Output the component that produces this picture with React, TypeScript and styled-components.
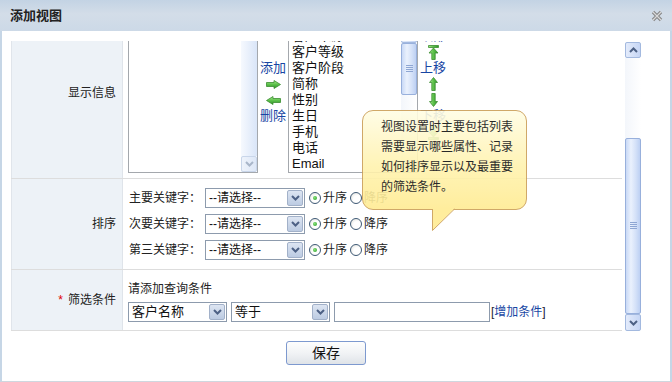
import React from 'react';
import styled, { createGlobalStyle } from 'styled-components';

const LINK = '#1846a3';

const GlobalStyle = createGlobalStyle`
  html, body { margin: 0; padding: 0; background: #fff; }
  body {
    font-family: "Liberation Sans", "Noto Sans CJK SC", sans-serif;
    font-size: 12px;
    color: #222;
  }
`;

const Dialog = styled.div`
  position: relative;
  width: 672px;
  height: 382px;
  display: flex;
  flex-direction: column;
  overflow: hidden;
  background: #fff;
`;

const TitleBar = styled.div`
  height: 31px;
  flex-shrink: 0;
  display: flex;
  align-items: center;
  justify-content: space-between;
  padding: 0 9px 0 10px;
  background: linear-gradient(#c3d3e4, #d3dde8 45%, #ccd9e7);
`;

const Title = styled.span`
  font-size: 13px;
  font-weight: bold;
  line-height: 16px;
  color: #222;
`;

const Body = styled.div`
  flex: 1;
  display: flex;
  flex-direction: column;
  border-left: 2px solid #c6d6e6;
  border-right: 2px solid #c6d6e6;
  border-bottom: 1px solid #cfd7df;
  padding: 10px 29px 0 9px;
`;

const ScrollRow = styled.div`
  display: flex;
  gap: 3px;
  height: 290px;
`;

const ScrollArea = styled.div`
  flex: 1;
  overflow: hidden;
`;

const FormTable = styled.div`
  margin-top: -21px;
`;

const Row = styled.div`
  display: flex;
  border-bottom: 1px solid #dddddd;
`;

const LabelCell = styled.div<{ $top?: number }>`
  width: 112px;
  flex-shrink: 0;
  box-sizing: border-box;
  background: #edf2f7;
  border-left: 1px solid #e0e5eb;
  border-right: 1px solid #dfe4ea;
  padding: ${(p) => (p.$top !== undefined ? `${p.$top}px` : '0')} 6px 0 0;
  display: flex;
  justify-content: flex-end;
  align-items: ${(p) => (p.$top !== undefined ? 'flex-start' : 'center')};
  font-size: 12px;
  line-height: 16px;
`;

const Required = styled.span`
  color: #e00000;
  margin-right: 5px;
`;

const ContentCell = styled.div<{ $pad: string; $column?: boolean }>`
  flex: 1;
  display: flex;
  flex-direction: ${(p) => (p.$column ? 'column' : 'row')};
  align-items: flex-start;
  gap: ${(p) => (p.$column ? '6px' : '0')};
  padding: ${(p) => p.$pad};
`;

/* ---------- list boxes ---------- */

const ListBox = styled.div`
  width: 130px;
  height: 147px;
  box-sizing: border-box;
  border: 1px solid #a4a8ad;
  background: #fff;
  display: flex;
`;

const ListItems = styled.div`
  flex: 1;
  padding: 1px 0 0 3px;
  font-size: 13px;
  line-height: 16px;
  color: #111;
  overflow: hidden;
  white-space: nowrap;
`;

const MoveColumn = styled.div<{ $top: number }>`
  width: 30px;
  display: flex;
  flex-direction: column;
  align-items: center;
  padding-top: ${(p) => p.$top}px;
`;

const Slot = styled.div`
  height: 16px;
  display: flex;
  align-items: center;
  justify-content: center;
  font-size: 13px;
  line-height: 16px;
  color: ${LINK};
  white-space: nowrap;
`;

/* ---------- scrollbars ---------- */

const VScroll = styled.div<{ $h: number; $mt?: number }>`
  width: 16px;
  height: ${(p) => p.$h}px;
  margin-top: ${(p) => p.$mt ?? 0}px;
  flex-shrink: 0;
  display: flex;
  flex-direction: column;
  background: linear-gradient(to right, #f1f5fb, #fdfeff);
`;

const ScrollBtn = styled.div<{ $h?: number; $off?: boolean }>`
  height: ${(p) => p.$h ?? 16}px;
  flex-shrink: 0;
  box-sizing: border-box;
  border: 1px solid ${(p) => (p.$off ? '#c9d6ea' : '#a3b9df')};
  border-radius: 2px;
  background: ${(p) =>
    p.$off ? 'linear-gradient(to right, #eef3fb, #dde7f7)' : 'linear-gradient(to right, #e3ebfb, #c6d6f5)'};
  display: flex;
  align-items: center;
  justify-content: center;
`;

const Track = styled.div<{ $h?: number; $tinted?: boolean }>`
  ${(p) => (p.$h !== undefined ? `height: ${p.$h}px;` : 'flex: 1;')}
  background: ${(p) =>
    p.$tinted ? 'linear-gradient(to right, #f6f9fe, #d9e5f8)' : 'linear-gradient(to right, #f3f6fb, #ffffff)'};
`;

const Thumb = styled.div<{ $h?: number }>`
  ${(p) => (p.$h !== undefined ? `height: ${p.$h}px;` : 'flex: 1;')}
  box-sizing: border-box;
  border: 1px solid #98b0dc;
  border-radius: 2px;
  background: linear-gradient(to right, #c9d9f6, #eaf1fd 35%, #d4e1f8 70%, #bdd0f3);
  display: flex;
  align-items: center;
  justify-content: center;
`;

const Chevron = ({ up, off }: { up?: boolean; off?: boolean }) => (
  <svg width="9" height="6" viewBox="0 0 9 6">
    <path
      d={up ? 'M1 5L4.5 1.5L8 5' : 'M1 1L4.5 4.5L8 1'}
      fill="none"
      stroke={off ? '#a9b6c9' : '#4d6185'}
      strokeWidth="2"
    />
  </svg>
);

const Grip = () => (
  <svg width="7" height="8" viewBox="0 0 7 8">
    {[0.5, 2.5, 4.5, 6.5].map((y) => (
      <line key={y} x1="0" y1={y} x2="7" y2={y} stroke="#8ea6d3" strokeWidth="1" />
    ))}
  </svg>
);

/* ---------- form controls ---------- */

const SortLine = styled.div`
  display: flex;
  align-items: center;
  height: 20px;
`;

const KeyLabel = styled.span`
  width: 72px;
  font-size: 12px;
  line-height: 16px;
  margin-right: 4px;
`;

const SelectBox = styled.div<{ $w: number }>`
  width: ${(p) => p.$w}px;
  height: 20px;
  box-sizing: border-box;
  border: 1px solid #8d9bad;
  background: #fff;
  display: flex;
  align-items: center;
  flex-shrink: 0;
`;

const SelectText = styled.span<{ $size: number }>`
  flex: 1;
  padding-left: 3px;
  font-size: ${(p) => p.$size}px;
  line-height: 16px;
  white-space: nowrap;
  overflow: hidden;
  color: #111;
`;

const SelectArrow = styled.span`
  width: 16px;
  height: 16px;
  margin-right: 1px;
  box-sizing: border-box;
  border: 1px solid #a2b1c9;
  border-radius: 2px;
  background: linear-gradient(#dde5f2, #bccbe2);
  display: flex;
  align-items: center;
  justify-content: center;
`;

const Select = ({ w, text, size = 12 }: { w: number; text: string; size?: number }) => (
  <SelectBox $w={w}>
    <SelectText $size={size}>{text}</SelectText>
    <SelectArrow>
      <Chevron />
    </SelectArrow>
  </SelectBox>
);

const RadioOption = styled.span<{ $ml: number }>`
  display: flex;
  align-items: center;
  gap: 2px;
  margin-left: ${(p) => p.$ml}px;
  font-size: 12px;
  line-height: 16px;
`;

const RadioDot = styled.span<{ $on?: boolean }>`
  width: 12px;
  height: 12px;
  box-sizing: border-box;
  border-radius: 50%;
  border: 1px solid #3d5874;
  background: radial-gradient(circle at 60% 60%, #ffffff 40%, #dcdcd6);
  display: flex;
  align-items: center;
  justify-content: center;
  &::after {
    content: '';
    display: ${(p) => (p.$on ? 'block' : 'none')};
    width: 4px;
    height: 4px;
    border-radius: 50%;
    background: radial-gradient(circle at 40% 40%, #8be27a, #1f9a23);
  }
`;

const Hint = styled.div`
  font-size: 12px;
  line-height: 16px;
  margin-bottom: -1px;
`;

const FilterLine = styled.div`
  display: flex;
  align-items: center;
  gap: 4px;
`;

const TextInput = styled.div`
  width: 156px;
  height: 20px;
  box-sizing: border-box;
  border: 1px solid #8d9bad;
  background: #fff;
`;

const AddLink = styled.span`
  margin-left: -3px;
  font-size: 12px;
  line-height: 16px;
  color: ${LINK};
  & b {
    font-weight: normal;
    color: #223;
  }
`;

/* ---------- footer ---------- */

const ButtonRow = styled.div`
  display: flex;
  justify-content: center;
  padding-top: 10px;
`;

const SaveButton = styled.button`
  width: 80px;
  height: 24px;
  box-sizing: border-box;
  border: 1px solid #7d99cf;
  border-radius: 3px;
  background: linear-gradient(#fdfdfd, #f1f3f5 50%, #dfe3e8);
  font-family: "Liberation Sans", "Noto Sans CJK SC", sans-serif;
  font-size: 14px;
  line-height: 16px;
  color: #111;
  padding: 0;
`;

/* ---------- tooltip ---------- */

const Tip = styled.div`
  position: absolute;
  left: 362px;
  top: 110px;
  width: 165px;
  height: 100px;
  opacity: 0.9;
`;

const Bubble = styled.div`
  width: 100%;
  height: 100%;
  box-sizing: border-box;
  border: 1px solid #cc9f58;
  border-radius: 11px;
  background: linear-gradient(#fffde4, #fff3b0 55%, #ffec93);
  padding: 6px 0 0 18px;
`;

const TipText = styled.div`
  width: 133px;
  font-size: 12px;
  line-height: 20px;
  color: #111;
`;

const Tail = styled.svg`
  position: absolute;
  left: 70px;
  top: 98px;
`;

/* ---------- icons ---------- */

const CloseIcon = () => (
  <svg width="12" height="12" viewBox="0 0 12 12">
    <path d="M2 2L10 10M10 2L2 10" stroke="#888" strokeWidth="3.4" />
    <path d="M2 2L10 10M10 2L2 10" stroke="#dadada" strokeWidth="1.1" />
  </svg>
);

type ArrowKind = 'right' | 'left' | 'top' | 'up' | 'down' | 'bottom';

const arrowShapes: Record<ArrowKind, { w: number; h: number; d: string }> = {
  right: { w: 15, h: 9, d: 'M0.5 2.5H8V0.5L14.5 4.5L8 8.5V6.5H0.5Z' },
  left: { w: 15, h: 9, d: 'M14.5 2.5H7V0.5L0.5 4.5L7 8.5V6.5H14.5Z' },
  top: { w: 11, h: 15, d: 'M0.5 0.5H10.5V2.5H0.5Z M5.5 3L10 8H7.2V14.5H3.8V8H1Z' },
  up: { w: 9, h: 14, d: 'M4.5 0.5L8.5 5.5H6.2V13.5H2.8V5.5H0.5Z' },
  down: { w: 9, h: 14, d: 'M4.5 13.5L8.5 8.5H6.2V0.5H2.8V8.5H0.5Z' },
  bottom: { w: 11, h: 15, d: 'M5.5 12L10 7H7.2V0.5H3.8V7H1Z M0.5 12.5H10.5V14.5H0.5Z' },
};

const GreenArrow = ({ kind }: { kind: ArrowKind }) => {
  const s = arrowShapes[kind];
  const gid = `ga-${kind}`;
  const horizontal = kind === 'left' || kind === 'right';
  return (
    <svg width={s.w} height={s.h} viewBox={`0 0 ${s.w} ${s.h}`}>
      <defs>
        <linearGradient id={gid} x1="0" y1="0" x2={horizontal ? '0' : '1'} y2={horizontal ? '1' : '0'}>
          <stop offset="0" stopColor="#a6e88c" />
          <stop offset="0.5" stopColor="#5cc04a" />
          <stop offset="1" stopColor="#2d9228" />
        </linearGradient>
      </defs>
      <path d={s.d} fill={`url(#${gid})`} stroke="#3a8d30" strokeWidth="0.8" />
    </svg>
  );
};

const fields = ['客户来源', '客户等级', '客户阶段', '简称', '性别', '生日', '手机', '电话', 'Email', '传真'];
const sortKeys = ['主要关键字：', '次要关键字：', '第三关键字：'];

export default function App() {
  return (
    <>
      <GlobalStyle />
      <Dialog>
        <TitleBar>
          <Title>添加视图</Title>
          <CloseIcon />
        </TitleBar>
        <Body>
          <ScrollRow>
            <ScrollArea>
              <FormTable>
                <Row>
                  <LabelCell $top={65}>显示信息</LabelCell>
                  <ContentCell $pad="6px 0 5px 5px">
                    <ListBox>
                      <ListItems />
                      <VScroll $h={145}>
                        <Track $tinted />
                        <ScrollBtn $off>
                          <Chevron off />
                        </ScrollBtn>
                      </VScroll>
                    </ListBox>
                    <MoveColumn $top={34}>
                      <Slot>添加</Slot>
                      <Slot>
                        <GreenArrow kind="right" />
                      </Slot>
                      <Slot>
                        <GreenArrow kind="left" />
                      </Slot>
                      <Slot>删除</Slot>
                    </MoveColumn>
                    <ListBox>
                      <ListItems>
                        {fields.map((f) => (
                          <div key={f}>{f}</div>
                        ))}
                      </ListItems>
                      <VScroll $h={145}>
                        <ScrollBtn>
                          <Chevron up />
                        </ScrollBtn>
                        <Thumb $h={52}>
                          <Grip />
                        </Thumb>
                        <Track />
                      </VScroll>
                    </ListBox>
                    <MoveColumn $top={2}>
                      <Slot>顶部</Slot>
                      <Slot>
                        <GreenArrow kind="top" />
                      </Slot>
                      <Slot>上移</Slot>
                      <Slot>
                        <GreenArrow kind="up" />
                      </Slot>
                      <Slot>
                        <GreenArrow kind="down" />
                      </Slot>
                      <Slot>下移</Slot>
                      <Slot>
                        <GreenArrow kind="bottom" />
                      </Slot>
                    </MoveColumn>
                  </ContentCell>
                </Row>
                <Row>
                  <LabelCell>排序</LabelCell>
                  <ContentCell $pad="9px 0 9px 6px" $column>
                    {sortKeys.map((k) => (
                      <SortLine key={k}>
                        <KeyLabel>{k}</KeyLabel>
                        <Select w={100} text="--请选择--" />
                        <RadioOption $ml={4}>
                          <RadioDot $on />
                          升序
                        </RadioOption>
                        <RadioOption $ml={3}>
                          <RadioDot />
                          降序
                        </RadioOption>
                      </SortLine>
                    ))}
                  </ContentCell>
                </Row>
                <Row>
                  <LabelCell>
                    <Required>*</Required>筛选条件
                  </LabelCell>
                  <ContentCell $pad="11px 0 8px 5px" $column>
                    <Hint>请添加查询条件</Hint>
                    <FilterLine>
                      <Select w={99} text="客户名称" size={13} />
                      <Select w={99} text="等于" size={13} />
                      <TextInput />
                      <AddLink>
                        <b>[</b>增加条件<b>]</b>
                      </AddLink>
                    </FilterLine>
                  </ContentCell>
                </Row>
              </FormTable>
            </ScrollArea>
            <VScroll $h={289} $mt={1}>
              <ScrollBtn>
                <Chevron up />
              </ScrollBtn>
              <Track $h={80} />
              <Thumb>
                <Grip />
              </Thumb>
              <ScrollBtn $h={17}>
                <Chevron />
              </ScrollBtn>
            </VScroll>
          </ScrollRow>
          <ButtonRow>
            <SaveButton>保存</SaveButton>
          </ButtonRow>
        </Body>
        <Tip>
          <Bubble>
            <TipText>视图设置时主要包括列表需要显示哪些属性、记录如何排序显示以及最重要的筛选条件。</TipText>
          </Bubble>
          <Tail width="26" height="26" viewBox="0 0 26 26">
            <path d="M0.5 0V22.5L23 0Z" fill="#ffec93" />
            <path d="M0.5 1V22.5L22.5 1" fill="none" stroke="#cc9f58" strokeWidth="1" />
          </Tail>
        </Tip>
      </Dialog>
    </>
  );
}
